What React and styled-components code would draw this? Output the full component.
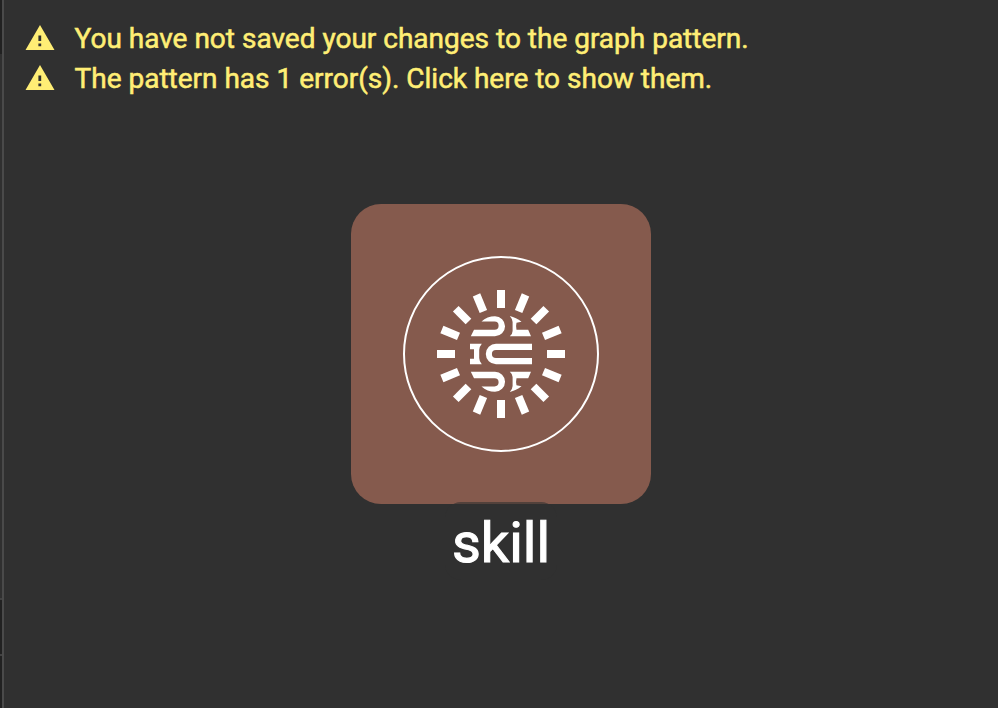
import React from 'react';
import styled, { createGlobalStyle } from 'styled-components';

const GlobalStyle = createGlobalStyle`
  * { box-sizing: border-box; }
  html, body { margin: 0; overflow: hidden; background: #303030; }
`;

const Page = styled.div`
  display: flex;
  width: 998px;
  height: 708px;
  background: #303030;
  font-family: Roboto, sans-serif;
`;

const Sidebar = styled.div`
  display: flex;
  flex-direction: column;
  width: 4px;
  border-right: 2px solid #4a4a4a;
`;

const SidebarBlock = styled.div`
  height: ${(p) => p.$height}px;
  background: ${(p) => (p.$dark ? '#212121' : '#303030')};
  border-bottom: ${(p) => (p.$line ? '2px solid #424242' : 'none')};
`;

const Main = styled.main`
  flex: 1;
  display: flex;
  flex-direction: column;
  padding-top: 18px;
`;

const Warning = styled.div`
  display: flex;
  align-items: center;
  height: 40px;
  padding-left: 21px;
  gap: 20px;
  color: #ffee75;
  font-size: 28px;
  line-height: 40px;
  white-space: nowrap;
`;

const WarningText = styled.span`
  padding-top: 2px;
  margin-left: -0.5px;
  -webkit-text-stroke: 0.55px currentColor;
`;

const WarningGlyph = styled.svg`
  display: block;
  width: 30px;
  height: 26px;
`;

const Node = styled.div`
  display: flex;
  flex-direction: column;
  align-items: center;
  width: 300px;
  margin: 106px 0 0 347px;
`;

const Tile = styled.div`
  display: flex;
  align-items: center;
  justify-content: center;
  width: 300px;
  height: 300px;
  border-radius: 30px;
  background: #855a4d;
`;

const Ring = styled.div`
  display: flex;
  align-items: center;
  justify-content: center;
  width: 196px;
  height: 196px;
  border: 2px solid #fff;
  border-radius: 50%;
`;

const Label = styled.div`
  width: 112px;
  height: 78px;
  margin-top: -2px;
  border-radius: 16px;
  background: rgba(48, 48, 48, 0.6);
  color: #fff;
  font-size: 56px;
  line-height: 82px;
  text-align: center;
  -webkit-text-stroke: 1.1px currentColor;
`;

const warnings = [
  'You have not saved your changes to the graph pattern.',
  'The pattern has 1 error(s). Click here to show them.',
];

function WarningIcon() {
  return (
    <WarningGlyph viewBox="0 0 30 26">
      <path fill="currentColor" fillRule="evenodd" d="M.5 25h29L15 0zM13.4 18.5h2.8v2.8h-2.8zM13.4 10.5h2.8v5.5h-2.8z" />
    </WarningGlyph>
  );
}

const rays = Array.from({ length: 16 }, (_, i) => i * 22.5);

function HalfGlyph() {
  return (
    <>
      <path d="M-19.5 -32.4C-16 -36 -11 -37.8 -6 -37.8A10 10 0 0 1 -6 -17.7H-30.2L-27 -24.2H-6.5A4 4 0 0 0 -6.5 -32.4Z" />
      <path d="M8.8 -38C13 -37 17 -35 20.5 -32.3L15.5 -31.3Q14.6 -28 15.5 -24.2H27.2L30 -17.7H8.8Q11.6 -20 11.6 -23V-32Q11.5 -35 8.8 -38Z" />
    </>
  );
}

function SkillLogo() {
  return (
    <svg width="128" height="128" viewBox="-64 -64 128 128" fill="#fff">
      {rays.map((angle) => (
        <rect key={angle} x="-4" y="-64" width="8" height="18" transform={`rotate(${angle})`} />
      ))}
      <HalfGlyph />
      <g transform="scale(1 -1)">
        <HalfGlyph />
      </g>
      <path d="M-31 -10.2H-19.2Q-21.8 -7 -21.8 -4V4Q-21.8 7 -19.2 10.2H-31V4.8H-27V-4.8H-31Z" />
      <path d="M31 -10.2H-5A10.2 10.2 0 0 0 -5 10.2H31V4.1H-5A4.1 4.1 0 0 1 -5 -4.1H31Z" />
    </svg>
  );
}

export default function App() {
  return (
    <>
      <GlobalStyle />
      <Page>
        <Sidebar>
          <SidebarBlock $height={54} $dark />
          <SidebarBlock $height={546} $line />
          <SidebarBlock $height={56} $dark $line />
          <SidebarBlock $height={52} $dark />
        </Sidebar>
        <Main>
          {warnings.map((text) => (
            <Warning key={text}>
              <WarningIcon />
              <WarningText>{text}</WarningText>
            </Warning>
          ))}
          <Node>
            <Tile>
              <Ring>
                <SkillLogo />
              </Ring>
            </Tile>
            <Label>skill</Label>
          </Node>
        </Main>
      </Page>
    </>
  );
}
